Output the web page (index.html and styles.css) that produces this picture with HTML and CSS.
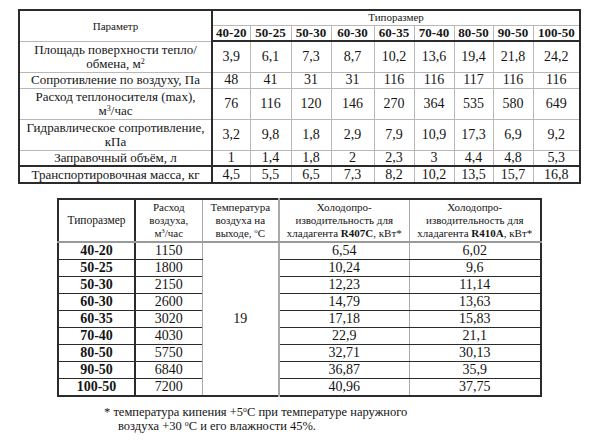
FILE: index.html
```html
<!DOCTYPE html>
<html lang="ru">
<head>
<meta charset="utf-8">
<link rel="stylesheet" href="styles.css">
</head>
<body>
<div class="page">
  <table class="t1">
    <colgroup>
      <col class="c-param">
      <col class="c-a"><col class="c-b"><col class="c-c"><col class="c-d"><col class="c-e"><col class="c-f"><col class="c-g"><col class="c-h"><col class="c-i">
    </colgroup>
    <tr class="r-h1">
      <td rowspan="2" class="param small">Параметр</td>
      <td colspan="9" class="small top-cap">Типоразмер</td>
    </tr>
    <tr class="r-h2 sizes">
      <td>40-20</td><td>50-25</td><td>50-30</td><td>60-30</td><td>60-35</td><td>70-40</td><td>80-50</td><td>90-50</td><td>100-50</td>
    </tr>
    <tr class="r-2l">
      <td class="param">Площадь поверхности тепло/<br>обмена, м<sup>2</sup></td>
      <td class="v">3,9</td><td class="v">6,1</td><td class="v">7,3</td><td class="v">8,7</td><td class="v">10,2</td><td class="v">13,6</td><td class="v">19,4</td><td class="v">21,8</td><td class="v">24,2</td>
    </tr>
    <tr class="r-1l">
      <td class="param">Сопротивление по воздуху, Па</td>
      <td class="v">48</td><td class="v">41</td><td class="v">31</td><td class="v">31</td><td class="v">116</td><td class="v">116</td><td class="v">117</td><td class="v">116</td><td class="v">116</td>
    </tr>
    <tr class="r-2l">
      <td class="param">Расход теплоносителя (max),<br>м<sup>3</sup>/час</td>
      <td class="v">76</td><td class="v">116</td><td class="v">120</td><td class="v">146</td><td class="v">270</td><td class="v">364</td><td class="v">535</td><td class="v">580</td><td class="v">649</td>
    </tr>
    <tr class="r-2l">
      <td class="param">Гидравлическое сопротивление,<br>кПа</td>
      <td class="v">3,2</td><td class="v">9,8</td><td class="v">1,8</td><td class="v">2,9</td><td class="v">7,9</td><td class="v">10,9</td><td class="v">17,3</td><td class="v">6,9</td><td class="v">9,2</td>
    </tr>
    <tr class="r-1l">
      <td class="param">Заправочный объём, л</td>
      <td class="v">1</td><td class="v">1,4</td><td class="v">1,8</td><td class="v">2</td><td class="v">2,3</td><td class="v">3</td><td class="v">4,4</td><td class="v">4,8</td><td class="v">5,3</td>
    </tr>
    <tr class="r-last">
      <td class="param">Транспортировочная масса, кг</td>
      <td class="v">4,5</td><td class="v">5,5</td><td class="v">6,5</td><td class="v">7,3</td><td class="v">8,2</td><td class="v">10,2</td><td class="v">13,5</td><td class="v">15,7</td><td class="v">16,8</td>
    </tr>
  </table>

  <table class="t2">
    <colgroup>
      <col class="d-size"><col class="d-air"><col class="d-temp"><col class="d-r1"><col class="d-r2">
    </colgroup>
    <tr class="h">
      <td class="size-h">Типоразмер</td>
      <td class="air">Расход<br>воздуха,<br>м<sup>3</sup>/час</td>
      <td class="temp">Температура<br>воздуха на<br>выходе, <sup>o</sup>C</td>
      <td class="r1">Холодопро-<br>изводительность для<br>хладагента <b>R407C</b>, кВт*</td>
      <td class="r2">Холодопро-<br>изводительность для<br>хладагента <b>R410A</b>, кВт*</td>
    </tr>
    <tr><td class="sz">40-20</td><td class="air">1150</td><td rowspan="9" class="temp big">19</td><td class="r1">6,54</td><td class="r2">6,02</td></tr>
    <tr><td class="sz">50-25</td><td class="air">1800</td><td class="r1">10,24</td><td class="r2">9,6</td></tr>
    <tr><td class="sz">50-30</td><td class="air">2150</td><td class="r1">12,23</td><td class="r2">11,14</td></tr>
    <tr><td class="sz">60-30</td><td class="air">2600</td><td class="r1">14,79</td><td class="r2">13,63</td></tr>
    <tr><td class="sz">60-35</td><td class="air">3020</td><td class="r1">17,18</td><td class="r2">15,83</td></tr>
    <tr><td class="sz">70-40</td><td class="air">4030</td><td class="r1">22,9</td><td class="r2">21,1</td></tr>
    <tr><td class="sz">80-50</td><td class="air">5750</td><td class="r1">32,71</td><td class="r2">30,13</td></tr>
    <tr><td class="sz">90-50</td><td class="air">6840</td><td class="r1">36,87</td><td class="r2">35,9</td></tr>
    <tr><td class="sz">100-50</td><td class="air">7200</td><td class="r1">40,96</td><td class="r2">37,75</td></tr>
  </table>

  <div class="note">
    <div>* температура кипения +5<sup>o</sup>C при температуре наружного</div>
    <div class="note2">воздуха +30 <sup>o</sup>C и его влажности 45%.</div>
  </div>
</div>
</body>
</html>
```

FILE: styles.css
```css
html, body {
  margin: 0;
  padding: 0;
  background: #ffffff;
}

.page {
  font-family: "Liberation Serif", "Times New Roman", serif;
  color: #151515;
  padding-top: 9px;
}

sup {
  font-size: 0.62em;
  line-height: 0;
  vertical-align: 0.55em;
}

/* ---------- table 1 ---------- */
.t1 {
  margin-left: 18px;
  border-collapse: collapse;
  table-layout: fixed;
  width: 561px;
  border: 2px solid #2b2b2b;
}

.t1 td {
  border: 1px solid #b8b8b8;
  padding: 0;
  text-align: center;
  vertical-align: middle;
  font-size: 13px;
  line-height: 14px;
}

.t1 .c-param { width: 193px; }
.t1 .c-a { width: 38px; }
.t1 .c-b { width: 41px; }
.t1 .c-c { width: 40px; }
.t1 .c-d { width: 43px; }
.t1 .c-e { width: 40px; }
.t1 .c-f { width: 40px; }
.t1 .c-g { width: 39px; }
.t1 .c-h { width: 40px; }
.t1 .c-i { width: 47px; }

.t1 td.param {
  border-right: 2px solid #2b2b2b;
}

.t1 td.small {
  font-size: 11px;
}

.t1 .top-cap {
  vertical-align: top;
  line-height: 13px;
}

.t1 .r-h1 { height: 15px; }
.t1 .r-h2 { height: 16px; }
.t1 .r-h2 td {
  border-bottom: 2px solid #2b2b2b;
  font-weight: bold;
  font-size: 13px;
  line-height: 14px;
}

.t1 .r-2l { height: 31px; }
.t1 .r-1l { height: 16px; }
.t1 .r-last { height: 17px; }

.t1 .r-last td {
  border-top: 2px solid #2b2b2b;
}

.t1 td.v {
  font-size: 14px;
}

/* ---------- table 2 ---------- */
.t2 {
  margin-top: 14px;
  margin-left: 57px;
  border-collapse: collapse;
  table-layout: fixed;
  width: 483px;
  border: 2px solid #2b2b2b;
}

.t2 .d-size { width: 77px; }
.t2 .d-air { width: 67px; }
.t2 .d-temp { width: 77px; }
.t2 .d-r1 { width: 130px; }
.t2 .d-r2 { width: 132px; }

.t2 td {
  padding: 0;
  text-align: center;
  font-size: 14px;
  line-height: 14px;
  height: 16px;
  border-top: 1px solid #2b2b2b;
  border-bottom: 1px solid #2b2b2b;
  border-left: 1px solid #a9a9a9;
  border-right: 1px solid #a9a9a9;
}

.t2 td.sz {
  font-weight: bold;
  font-size: 14px;
}

.t2 td.sz,
.t2 td.size-h {
  border-right: 2px solid #2b2b2b;
}

.t2 tr.h td {
  height: 41px;
  font-size: 11px;
  line-height: 13px;
  border-bottom: 2px solid #9a9a9a;
  vertical-align: middle;
}

.t2 tr.h td.size-h {
  font-size: 11.5px;
}

.t2 td.temp {
  border-left: 1px solid #a9a9a9;
  border-right: 2px solid #a9a9a9;
}

.t2 td.big {
  font-size: 14px;
  vertical-align: middle;
  border-bottom: 1px solid #2b2b2b;
}

/* ---------- note ---------- */
.note {
  margin-top: 8px;
  margin-left: 104px;
  font-size: 12.5px;
  line-height: 14px;
}

.note .note2 {
  margin-left: 14px;
}
```
